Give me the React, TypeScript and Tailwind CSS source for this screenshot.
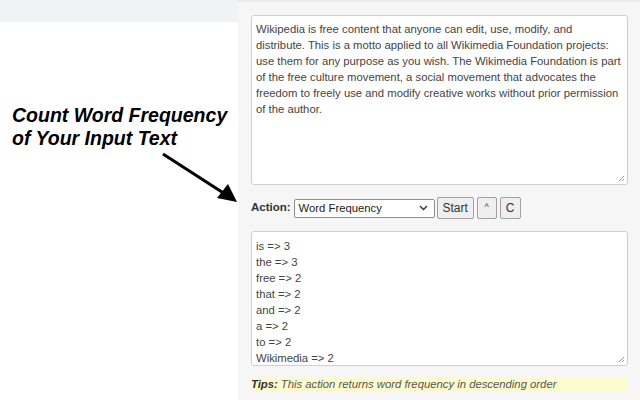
const sampleLines = [
  'Wikipedia is free content that anyone can edit, use, modify, and',
  'distribute. This is a motto applied to all Wikimedia Foundation projects:',
  'use them for any purpose as you wish. The Wikimedia Foundation is part',
  'of the free culture movement, a social movement that advocates the',
  'freedom to freely use and modify creative works without prior permission',
  'of the author.',
];

const results: [string, number][] = [
  ['is', 3],
  ['the', 3],
  ['free', 2],
  ['that', 2],
  ['and', 2],
  ['a', 2],
  ['to', 2],
  ['Wikimedia', 2],
];

function Grip() {
  return (
    <svg width="7" height="7" viewBox="0 0 7 7" className="absolute bottom-[2px] right-[2px]">
      <path d="M6 1L1 6M6 4L4 6" stroke="#999" strokeWidth="1" />
    </svg>
  );
}

function Btn({ children, w }: { children: React.ReactNode; w: string }) {
  return (
    <div
      className={`${w} h-[22px] flex items-center justify-center bg-[#efefef] border border-[#a0a0a0] rounded-[2px] text-[12px] text-[#333]`}
    >
      {children}
    </div>
  );
}

export default function App() {
  return (
    <div className="w-[640px] h-[400px] flex bg-white overflow-hidden font-['Liberation_Sans',Arial,sans-serif]">
      {/* left promo */}
      <div className="w-[238px] shrink-0 relative">
        <div className="h-[22px] bg-[#f1f2f4]" />
        <div className="pl-[12px] pt-[82px] text-[19.5px] leading-[23px] font-bold italic text-black">
          <div>Count Word Frequency</div>
          <div>of Your Input Text</div>
        </div>
        <svg width="90" height="60" viewBox="0 0 90 60" className="absolute left-[150px] top-[148px]">
          <line x1="13" y1="6" x2="75" y2="46" stroke="#000" strokeWidth="3" />
          <polygon points="87,54 67,50 78,36" fill="#000" />
        </svg>
      </div>

      {/* tool panel */}
      <div className="flex-1 bg-[#f6f6f6] border-t-2 border-[#ececec] pl-[13px] pr-[12px] pt-[13px]">
        <div className="relative h-[170px] bg-white border border-[#d0d0d0] rounded-[3px] px-[4px] pt-[5px] text-[11.3px] leading-[16px] text-[#444] whitespace-nowrap">
          {sampleLines.map((l) => (
            <div key={l}>{l}</div>
          ))}
          <Grip />
        </div>

        <div className="flex items-center mt-[12px] h-[22px]">
          <span className="text-[11.5px] font-bold text-[#333] mr-[3px]">Action:</span>
          <div className="w-[141px] h-[19px] flex items-center justify-between bg-white border border-[#8f8f8f] rounded-[2px] pl-[4px] pr-[6px] text-[11.3px] text-[#222]">
            <span>Word Frequency</span>
            <svg width="9" height="6" viewBox="0 0 9 6">
              <path d="M1 1L4.5 4.5L8 1" stroke="#333" strokeWidth="1.4" fill="none" />
            </svg>
          </div>
          <div className="ml-[2px] flex gap-[3px]">
            <Btn w="w-[37px]">Start</Btn>
            <Btn w="w-[20px]">
              <span className="text-[9px]">^</span>
            </Btn>
            <Btn w="w-[21px]">C</Btn>
          </div>
        </div>

        <div className="relative mt-[12px] h-[135px] bg-white border border-[#d0d0d0] rounded-[3px] px-[4px] pt-[6px] text-[11.3px] leading-[16px] text-[#444]">
          {results.map(([w, n]) => (
            <div key={w}>
              {w} =&gt; {n}
            </div>
          ))}
          <Grip />
        </div>

        <div className="mt-[11px] h-[15px] bg-[#fdfbcd] flex items-center text-[11.3px] italic text-[#555]">
          <span className="font-bold text-[#333] mr-[3px]">Tips:</span>
          This action returns word frequency in descending order
        </div>
      </div>
    </div>
  );
}
